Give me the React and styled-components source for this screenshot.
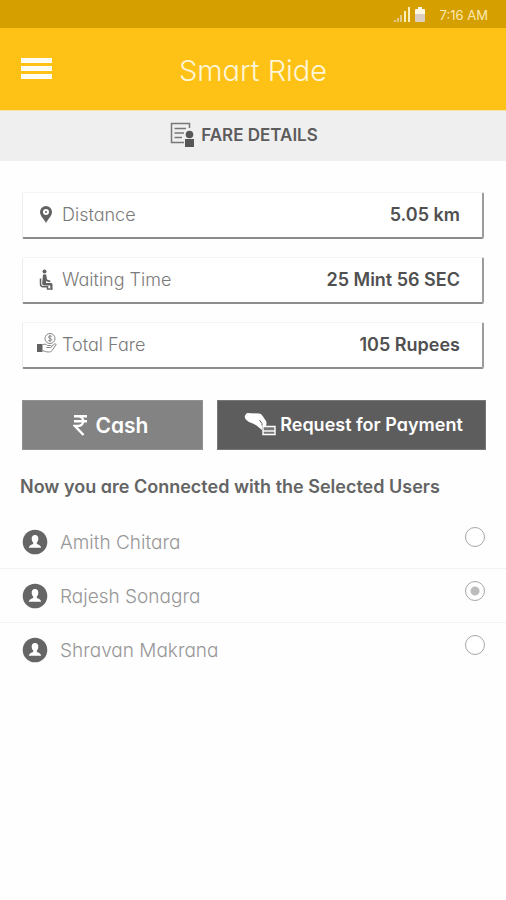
import React, { useState } from "react";
import styled, { createGlobalStyle } from "styled-components";

const GlobalStyle = createGlobalStyle`
  *, *::before, *::after { box-sizing: border-box; }
  body {
    margin: 0;
    background: #fefefe;
    color: #5a5a5a;
    font-family: Inter, Lato, "Liberation Sans", sans-serif;
    font-feature-settings: "cv11";
  }
  button, input { font: inherit; font-feature-settings: inherit; }
`;

const StatusBar = styled.div`
  display: flex;
  align-items: center;
  justify-content: flex-end;
  height: 28px;
  padding: 2px 18px 0 0;
  background: #d69f00;
  color: #fbe9b4;
  font-size: 13px;
`;

const SignalIcon = styled.svg`
  width: 18px;
  height: 16px;
  margin-right: 3px;
`;

const BatteryIcon = styled.svg`
  width: 12px;
  height: 16px;
  margin-right: 14px;
`;

const AppBar = styled.header`
  display: grid;
  grid-template-columns: 1fr auto 1fr;
  align-items: center;
  height: 82px;
  padding: 0 21px;
  background: #fec216;
`;

const MenuButton = styled.button`
  display: flex;
  justify-self: start;
  padding: 0;
  border: 0;
  background: none;
  cursor: pointer;
`;

const Title = styled.h1`
  margin: 0;
  padding-top: 4px;
  color: #fff6d8;
  font-size: 29px;
  font-weight: 300;
  line-height: 36px;
`;

const SectionBar = styled.div`
  display: flex;
  align-items: center;
  justify-content: center;
  gap: 6px;
  height: 51px;
  padding: 0 18px 2px 0;
  border-top: 1px solid #f6e3a6;
  background: #efefef;
`;

const SectionTitle = styled.h2`
  margin: 0;
  color: #5c5c5c;
  font-size: 17px;
  font-weight: 600;
  line-height: 24px;
`;

const Content = styled.main`
  padding: 31px 20px 0 22px;
`;

const FareList = styled.dl`
  display: flex;
  flex-direction: column;
  gap: 18px;
  margin: 0 2px 31px 0;
`;

const FareRow = styled.div`
  display: flex;
  align-items: center;
  height: 47px;
  padding: 0 22px 2px 13px;
  border: solid;
  border-width: 1px 2px 2px 1px;
  border-color: #f4f4f4 #9c9c9c #8c8c8c #ececec;
  border-radius: 2px;
  background: #fff;
`;

const FareIcon = styled.svg`
  width: 22px;
  height: 24px;
  margin-right: 4px;
  color: #626262;
`;

const FareLabel = styled.dt`
  flex: 1;
  color: #7a7a7a;
  font-size: 18px;
  font-weight: 300;
`;

const FareValue = styled.dd`
  margin: 0;
  color: #505050;
  font-size: 18px;
  font-weight: 600;
`;

const Actions = styled.div`
  display: grid;
  grid-template-columns: 181fr 269fr;
  gap: 14px;
`;

const ActionButton = styled.button`
  display: flex;
  align-items: center;
  justify-content: center;
  gap: ${(p) => (p.$primary ? "4px" : "8px")};
  height: 50px;
  padding: ${(p) => (p.$primary ? "0 0 2px 4px" : "0 4px 0 0")};
  border: 1px solid ${(p) => (p.$primary ? "#777" : "#929292")};
  background: ${(p) => (p.$primary ? "#5d5d5d" : "#838383")};
  color: #fff;
  font-size: ${(p) => (p.$primary ? "18px" : "21px")};
  font-weight: 600;
  white-space: nowrap;
  cursor: pointer;
`;

const UserGroup = styled.fieldset`
  min-width: 0;
  margin: 0;
  padding: 25px 0 0;
  border: 0;
`;

const UserLegend = styled.legend`
  float: left;
  width: 100%;
  margin: 0 0 16px;
  padding: 0 20px;
  color: #646464;
  font-size: 18px;
  font-weight: 600;
  line-height: 24px;
`;

const UserRow = styled.label`
  display: flex;
  clear: both;
  align-items: flex-start;
  height: 54px;
  padding: 12px 21px 0 22px;
  border-bottom: 1px solid #f3f3f3;
  cursor: pointer;

  &:last-child { border-bottom: 0; }
`;

const Avatar = styled.svg`
  width: 26px;
  height: 26px;
  margin: 2px 12px 0 0;
`;

const UserName = styled.span`
  flex: 1;
  padding-top: 3px;
  color: #979797;
  font-size: 19px;
  font-weight: 300;
  line-height: 26px;
`;

const UserRadio = styled.input`
  appearance: none;
  width: 20px;
  height: 20px;
  margin: 0;
  border: 1px solid #a6a6a6;
  border-radius: 50%;
  background: #fff;

  &:checked {
    background: radial-gradient(circle, #bcbcbc 0 4px, #fff 5px);
  }
`;

function DistanceIcon() {
  return (
    <FareIcon viewBox="0 0 22 24" aria-hidden="true">
      <path fill="currentColor" fillRule="evenodd" d="M10 4a6 6 0 0 0-6 6c0 4 4 7 6 11 2-4 6-7 6-11a6 6 0 0 0-6-6Zm0 3a3 3 0 1 1 0 6 3 3 0 0 1 0-6Z" />
      <circle cx="10" cy="10" r="1" fill="currentColor" />
    </FareIcon>
  );
}

function WaitingIcon() {
  return (
    <FareIcon viewBox="0 0 22 24" aria-hidden="true">
      <circle cx="8.500" cy="4.500" r="2" fill="currentColor" />
      <path fill="currentColor" d="M7 7.500h3.200l.8 5 3.600 1.200-.5 1.500-4.100-.9v1.700h4.500c1.500 0 2 .5 2 2V23h-2.200v-4.500H8.500c-1.800 0-2.500-1-2.300-2.500Z" />
      <path fill="none" stroke="currentColor" strokeWidth="1.500" d="M4.500 11.500v5.200c0 2 .8 3 2.500 3h4.500V22H14" />
    </FareIcon>
  );
}

function FareHandIcon() {
  return (
    <FareIcon viewBox="0 0 22 24" aria-hidden="true">
      <path fill="currentColor" d="M1 12h5.500v8H1Z" />
      <g fill="none" stroke="#858585" strokeWidth="1">
        <circle cx="14" cy="6.500" r="5" />
        <path d="M15.800 4.500c-1-1-3.400-.7-3.300.7.100 1.500 3.200.9 3.200 2.500 0 1.400-2.500 1.600-3.500.5M14 3v7" />
        <path d="M6.500 13c2-1.400 3.500-1 5 .5h3c1.500 0 1.500 2 0 2h-4M15.500 14.500l3-2.500c1-.7 2 .2 1.300 1.200L16 18.500c-1 1.200-2 1.500-3.500 1.500-2.500 0-4-.8-6-1.500" />
      </g>
    </FareIcon>
  );
}

const fares = [
  { label: "Distance", value: "5.05 km", Icon: DistanceIcon },
  { label: "Waiting Time", value: "25 Mint 56 SEC", Icon: WaitingIcon },
  { label: "Total Fare", value: "105 Rupees", Icon: FareHandIcon },
];

const users = ["Amith Chitara", "Rajesh Sonagra", "Shravan Makrana"];

export default function App() {
  const [selected, setSelected] = useState("Rajesh Sonagra");

  return (
    <>
      <GlobalStyle />
      <StatusBar>
        <SignalIcon viewBox="0 0 18 16" aria-hidden="true">
          <path fill="#e3c988" d="M1 13h2v2H1ZM4 11h2v4H4ZM7 8h2v7H7Z" />
          <path fill="#faeebc" d="M11 4h2v11h-2ZM15 0h2v15h-2Z" />
        </SignalIcon>
        <BatteryIcon viewBox="0 0 12 16" aria-hidden="true">
          <path fill="#fff9e4" d="M4 0h4v2h2q1 0 1 1v5H1V3q0-1 1-1h2Z" />
          <path fill="#dccfc2" d="M1 7h10v7q0 1-1 1H2q-1 0-1-1Z" />
        </BatteryIcon>
        <time>7:16 AM</time>
      </StatusBar>
      <AppBar>
        <MenuButton type="button" aria-label="Open menu">
          <svg width="32" height="24" viewBox="0 0 32 24" aria-hidden="true">
            <path fill="#fffdf4" d="M0 1h31v5H0ZM0 9h31v5H0ZM0 17h31v5H0Z" />
          </svg>
        </MenuButton>
        <Title>Smart Ride</Title>
      </AppBar>
      <SectionBar>
        <svg width="25" height="26" viewBox="0 0 25 26" aria-hidden="true">
          <path fill="none" stroke="#777" strokeWidth="1.500" d="M14 20.500H1.500V1.500h18V6M4.500 6.500H16M4.500 11H14M4.500 15.500H12" />
          <circle cx="19.500" cy="12.500" r="3.800" fill="#565656" />
          <path fill="#565656" d="M15 17h9v8h-9Z" />
        </svg>
        <SectionTitle>FARE DETAILS</SectionTitle>
      </SectionBar>
      <Content>
        <FareList>
          {fares.map(({ label, value, Icon }) => (
            <FareRow key={label}>
              <Icon />
              <FareLabel>{label}</FareLabel>
              <FareValue>{value}</FareValue>
            </FareRow>
          ))}
        </FareList>
        <Actions>
          <ActionButton type="button">
            <svg width="15" height="22" viewBox="0 0 15 22" aria-hidden="true">
              <path fill="none" stroke="#fff" strokeWidth="2.400" d="M1 2.200h13M1 7.200h13M1 2.200h4c7 0 7 9.800 0 9.800H2l8.500 9" />
            </svg>
            Cash
          </ActionButton>
          <ActionButton type="button" $primary>
            <svg width="32" height="24" viewBox="0 0 32 24" aria-hidden="true">
              <path fill="#fff" d="M1 3.500 3 1l12 .5c2 .2 3 1.500 4 3l3 4.500c1 2 .5 3.500-.2 5H18v4l-5.500-4.500C9 11 5 11 2.500 8 1 6.500.5 5 1 3.500Z" />
              <path fill="none" stroke="#5d5d5d" strokeWidth="1" d="m15.500 8 2.500 3.500v2" />
              <path fill="#777" stroke="#fff" strokeWidth="1.400" d="M19 14.500h12v8H19Z" />
              <path stroke="#fff" strokeWidth="1.400" d="M19 19h12" />
            </svg>
            Request for Payment
          </ActionButton>
        </Actions>
      </Content>
      <UserGroup>
        <UserLegend>Now you are Connected with the Selected Users</UserLegend>
        {users.map((name) => (
          <UserRow key={name}>
            <Avatar viewBox="0 0 26 26" aria-hidden="true">
              <circle cx="13" cy="13" r="12.300" fill="#656565" />
              <path fill="#fff" d="M13 6c-2.500 0-3.500 1.700-3.300 4 .1 1.700.8 2.800 1.500 3.600v1.500c-1.800.7-4 1.200-4.400 3.700h12.400c-.4-2.500-2.600-3-4.400-3.700v-1.500c.7-.8 1.400-1.900 1.500-3.600C16.500 7.700 15.500 6 13 6Z" />
            </Avatar>
            <UserName>{name}</UserName>
            <UserRadio
              type="radio"
              name="user"
              value={name}
              checked={selected === name}
              onChange={() => setSelected(name)}
            />
          </UserRow>
        ))}
      </UserGroup>
    </>
  );
}
